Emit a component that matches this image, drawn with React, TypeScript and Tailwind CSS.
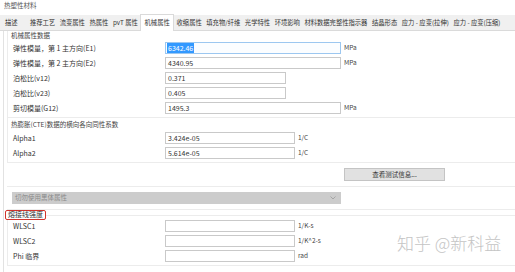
import React from 'react'

// ─── Data ───────────────────────────────────────────────────

const TABS = [
  '描述', '推荐工艺', '流变属性', '热属性', 'pvT 属性', '机械属性', '收缩属性',
  '填充物/纤维', '光学特性', '环境影响', '材料数据完整性指示器', '结晶形态',
  '应力 - 应变(拉伸)', '应力 - 应变(压缩)',
]

interface Field {
  label: string
  value: string
  width: number
  unit?: string
  selected?: boolean
}

const MECH: Field[] = [
  { label: '弹性模量，第 1 主方向(E1)', value: '6342.46', width: 176, unit: 'MPa', selected: true },
  { label: '弹性模量，第 2 主方向(E2)', value: '4340.95', width: 176, unit: 'MPa' },
  { label: '泊松比(v12)', value: '0.371', width: 121 },
  { label: '泊松比(v23)', value: '0.405', width: 121 },
  { label: '剪切模量(G12)', value: '1495.3', width: 176, unit: 'MPa' },
]

const CTE: Field[] = [
  { label: 'Alpha1', value: '3.424e-05', width: 130, unit: '1/C' },
  { label: 'Alpha2', value: '5.614e-05', width: 130, unit: '1/C' },
]

const WELD: Field[] = [
  { label: 'WLSC1', value: '', width: 130, unit: '1/K-s' },
  { label: 'WLSC2', value: '', width: 130, unit: '1/K^2-s' },
  { label: 'Phi 临界', value: '', width: 130, unit: 'rad' },
]

// ─── Row ────────────────────────────────────────────────────

function FieldRow({ f, gap = 3 }: { f: Field; gap?: number }) {
  return (
    <div className="flex items-center h-[12px]" style={{ marginBottom: gap }}>
      <span className="w-[157px] shrink-0 pl-[5px] text-[7px] leading-[12px] text-[#333]">{f.label}</span>
      <div
        className={`h-[12px] flex items-center px-[1px] border text-[7px] leading-[10px] text-[#333] ${
          f.selected ? 'border-[#9cc7f0] bg-[#fbfdff]' : 'border-[#c9c9c9] bg-white'
        }`}
        style={{ width: f.width }}
      >
        {f.selected ? (
          <span className="bg-[#3399ff] text-white px-[1px]">{f.value}</span>
        ) : (
          <span className="px-[1px]">{f.value}</span>
        )}
      </div>
      {f.unit && <span className="ml-[3px] text-[6.5px] text-[#444]">{f.unit}</span>}
    </div>
  )
}

// ─── Main ───────────────────────────────────────────────────

export default function App() {
  return (
    <div className="relative w-[515px] h-[272px] overflow-hidden bg-white font-['Noto_Sans_CJK_SC','Microsoft_YaHei',sans-serif]">
      {/* Window title */}
      <div className="h-[15px] pl-[4px] pt-[1px] text-[6.5px] leading-[9px] text-[#555]">热塑性材料</div>

      {/* Tabs */}
      <div className="h-[16px] flex items-stretch bg-[#f0f0f0] border-b border-[#dadada] pl-[2px] text-[6.3px] text-[#333] whitespace-nowrap">
        {TABS.map((t, i) => (
          <div
            key={t}
            className={`flex items-center px-[2.3px] ${i === 0 ? 'pr-[10px] pl-[3px]' : ''} ${
              t === '机械属性' ? 'bg-white border-x border-t border-[#dadada] -mb-[1px] -mt-[1px] px-[3.5px]' : ''
            }`}
          >
            {t}
          </div>
        ))}
      </div>

      {/* Content */}
      <div className="ml-[3px] border-l border-[#e2e2e2] h-[241px] bg-white">
        {/* Mechanical group */}
        <div className="ml-[3px] border-l border-b border-[#ececec]">
          <div className="h-[8px] pl-[3px] text-[6.5px] leading-[8px] text-[#444]">机械属性数据</div>
          <div className="pt-[3px]">
            {MECH.map((f) => <FieldRow key={f.label} f={f} />)}
          </div>
        </div>

        {/* CTE group */}
        <div className="ml-[3px] border-l border-b border-[#ececec]">
          <div className="h-[13px] pl-[3px] text-[6.5px] leading-[13px] text-[#444]">热膨胀(CTE)数据的横向各向同性系数</div>
          <div className="pt-[1px]">
            {CTE.map((f) => <FieldRow key={f.label} f={f} />)}
          </div>
        </div>

        {/* Test info button */}
        <div className="ml-[3px] h-[24px] flex items-center border-b border-[#ececec]">
          <button className="ml-[337px] w-[101px] h-[13px] bg-[#e1e1e1] border border-[#c4c4c4] text-[6.5px] leading-[11px] text-[#333]">
            查看测试信息...
          </button>
        </div>

        {/* Disabled dropdown */}
        <div className="ml-[3px] h-[23px] flex items-center border-b border-[#ececec]">
          <div className="ml-[5px] w-[329px] h-[12px] flex items-center justify-between bg-[#cccccc] px-[3px] text-[6.5px] text-[#8a8a8a]">
            <span>切勿使用黑体属性</span>
            <svg width="6" height="4" viewBox="0 0 6 4" className="mr-[2px]">
              <path d="M0.5 0.5 L3 3 L5.5 0.5" fill="none" stroke="#9a9a9a" strokeWidth="0.8" />
            </svg>
          </div>
        </div>

        {/* Weld line strength group */}
        <div className="ml-[3px] border-l border-b border-[#ececec]">
          <div className="h-[10px] flex items-start">
            <span className="-ml-[3px] h-[10px] px-[2px] border-[1.5px] border-[#d0342c] rounded-[2px] text-[7px] leading-[7px] text-[#333] bg-white">
              熔接线强度
            </span>
            <div className="flex-1 mt-[5px] border-t border-[#ececec]" />
          </div>
          <div className="pb-[3px]">
            {WELD.map((f, i) => <FieldRow key={f.label} f={f} gap={i === 2 ? 0 : 3} />)}
          </div>
        </div>
      </div>

      {/* Watermark */}
      <div className="absolute left-[397px] top-[232px] text-[17px] leading-[22px] font-light text-[#c4c4c4] whitespace-nowrap">
        知乎 @新科益
      </div>
    </div>
  )
}
